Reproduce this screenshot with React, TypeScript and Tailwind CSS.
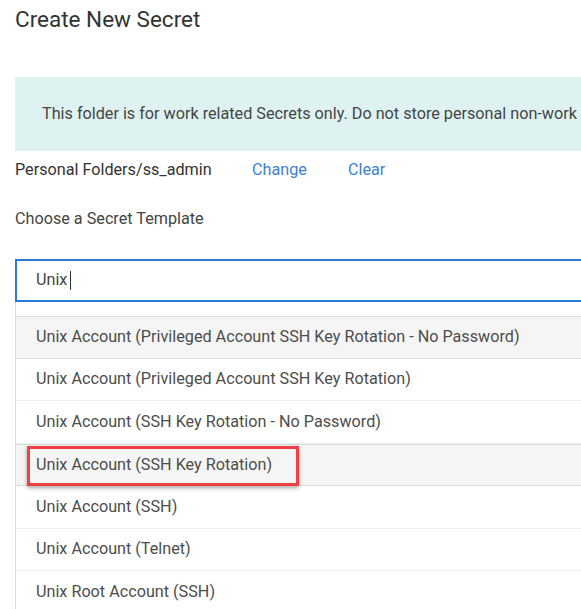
import React from "react";

const rows = [
  { label: "Unix Account (Privileged Account SSH Key Rotation - No Password)", gray: true },
  { label: "Unix Account (Privileged Account SSH Key Rotation)" },
  { label: "Unix Account (SSH Key Rotation - No Password)" },
  { label: "Unix Account (SSH Key Rotation)", gray: true, mark: true },
  { label: "Unix Account (SSH)" },
  { label: "Unix Account (Telnet)" },
  { label: "Unix Root Account (SSH)" },
];

export default function App() {
  return (
    <div className="w-[581px] h-[609px] overflow-hidden bg-white font-['Roboto',sans-serif]">
      <div className="w-[660px] pl-[15px]">
        <h1 className="pt-[6px] text-[22.5px] leading-[26px] text-[#333]">Create New Secret</h1>
        <div className="mt-[45px] h-[74px] flex items-center pl-[27px] bg-[#dff2f2] text-[16.2px] text-[#454545] whitespace-nowrap">
          This folder is for work related Secrets only. Do not store personal non-work
        </div>
        <div className="mt-[9px] flex items-center h-[20px] text-[16.2px] whitespace-nowrap">
          <span className="text-[#333] w-[237px]">Personal Folders/ss_admin</span>
          <span className="text-[#3d7fd6] w-[96px]">Change</span>
          <span className="text-[#3d7fd6]">Clear</span>
        </div>
        <div className="mt-[29px] h-[20px] leading-[20px] text-[16.2px] text-[#444]">Choose a Secret Template</div>
        <div className="mt-[30px] h-[43px] border-2 border-[#2b7ad6] flex items-center pl-[19px] text-[16.2px] text-[#444]">
          <span>Unix</span>
          <span className="ml-[3px] inline-block w-px h-[19px] bg-[#333]" />
        </div>
        <div className="border-l border-[#dcdcdc]">
          <div className="h-[14px]" />
          {rows.map((r, i) => (
            <div
              key={i}
              className={
                "relative h-[42.5px] flex items-center pl-[20px] text-[16.2px] text-[#4d4d4d] whitespace-nowrap " +
                (r.gray ? "bg-[#f5f5f5] border-y border-[#dcdcdc]" : "border-b border-[#f0f0f0]")
              }
            >
              {r.label}
              {r.mark && (
                <div className="absolute left-[11px] top-[1px] w-[272px] h-[40px] border-[3px] border-[#ef4046] shadow-[0_2px_4px_rgba(0,0,0,0.35)]" />
              )}
            </div>
          ))}
        </div>
      </div>
    </div>
  );
}
